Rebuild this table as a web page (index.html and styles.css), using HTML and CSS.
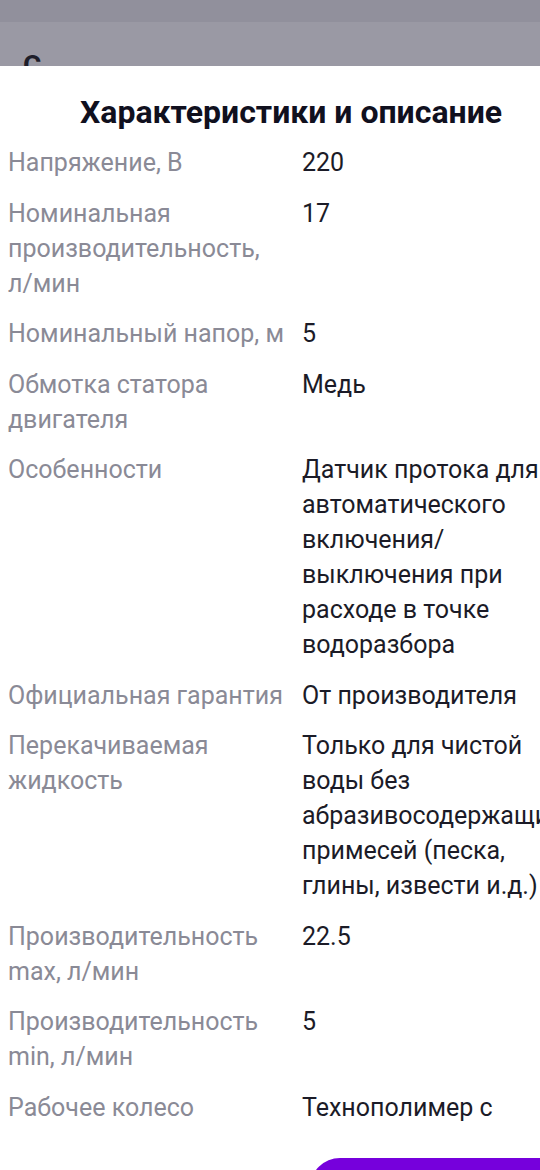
FILE: index.html
```html
<!DOCTYPE html>
<html lang="ru">
<head>
<meta charset="utf-8">
<title>Характеристики и описание</title>
<link rel="stylesheet" href="styles.css">
</head>
<body>
<div class="screen">
  <div class="backdrop">
    <div class="status"></div>
    <div class="behind"><span class="behind-text">С</span></div>
  </div>
  <div class="sheet">
    <h1 class="title">Характеристики и описание</h1>
    <dl class="specs">
      <dt>Напряжение, В</dt><dd>220</dd>
      <dt>Номинальная производительность, л/&#8288;мин</dt><dd>17</dd>
      <dt>Номинальный напор, м</dt><dd>5</dd>
      <dt>Обмотка статора двигателя</dt><dd>Медь</dd>
      <dt>Особенности</dt><dd>Датчик протока для автоматического включения/<wbr>выключения при расходе в точке водоразбора</dd>
      <dt>Официальная гарантия</dt><dd>От производителя</dd>
      <dt>Перекачиваемая жидкость</dt><dd>Только для чистой воды без абразивосодержащих примесей (песка, глины, извести и.д.)</dd>
      <dt>Производительность max, л/&#8288;мин</dt><dd>22.5</dd>
      <dt>Производительность min, л/&#8288;мин</dt><dd>5</dd>
      <dt>Рабочее колесо</dt><dd>Технополимер с добавлением стекловолокна</dd>
    </dl>
    <div class="footer">
      <button class="buy" type="button"></button>
    </div>
  </div>
</div>
</body>
</html>
```
FILE: styles.css
```css
html, body {
  margin: 0;
  padding: 0;
  background: #ffffff;
}
body {
  font-family: Roboto, "Noto Sans", "Liberation Sans", sans-serif;
  width: 540px;
  height: 1170px;
  overflow: hidden;
}
.screen {
  position: relative;
  width: 540px;
  height: 1170px;
  overflow: hidden;
  display: flex;
  flex-direction: column;
}
.backdrop {
  display: flex;
  flex-direction: column;
  flex: 0 0 auto;
}
.status {
  height: 22px;
  background: #91909c;
}
.behind {
  height: 44px;
  background: #9a99a4;
  overflow: hidden;
  padding-left: 23px;
  box-sizing: border-box;
}
.behind-text {
  display: block;
  margin-top: 29px;
  font-size: 28px;
  font-weight: 700;
  line-height: 30px;
  color: #1e1e2a;
}
.sheet {
  position: relative;
  flex: 1 1 auto;
  background: #ffffff;
  overflow: hidden;
}
.title {
  margin: 0;
  padding: 26px 0 0 42px;
  text-align: center;
  font-size: 32px;
  font-weight: 700;
  line-height: 40px;
  color: #10101e;
  white-space: nowrap;
}
.specs {
  margin: 13px 0 0 0;
  padding: 0 0 0 8px;
  display: grid;
  grid-template-columns: 285px 238px;
  column-gap: 9px;
  row-gap: 15.5px;
  font-size: 25px;
  line-height: 35px;
}
.specs dt {
  color: #8a8a96;
  margin: 0;
}
.specs dd {
  color: #1b1b27;
  margin: 0;
}
.footer {
  position: absolute;
  left: 0;
  right: 0;
  bottom: 0;
  height: 46px;
  background: #ffffff;
}
.buy {
  position: absolute;
  left: 310px;
  top: 34px;
  width: 260px;
  height: 60px;
  border: 0;
  border-radius: 30px;
  background: #7600dc;
  padding: 0;
}
```
